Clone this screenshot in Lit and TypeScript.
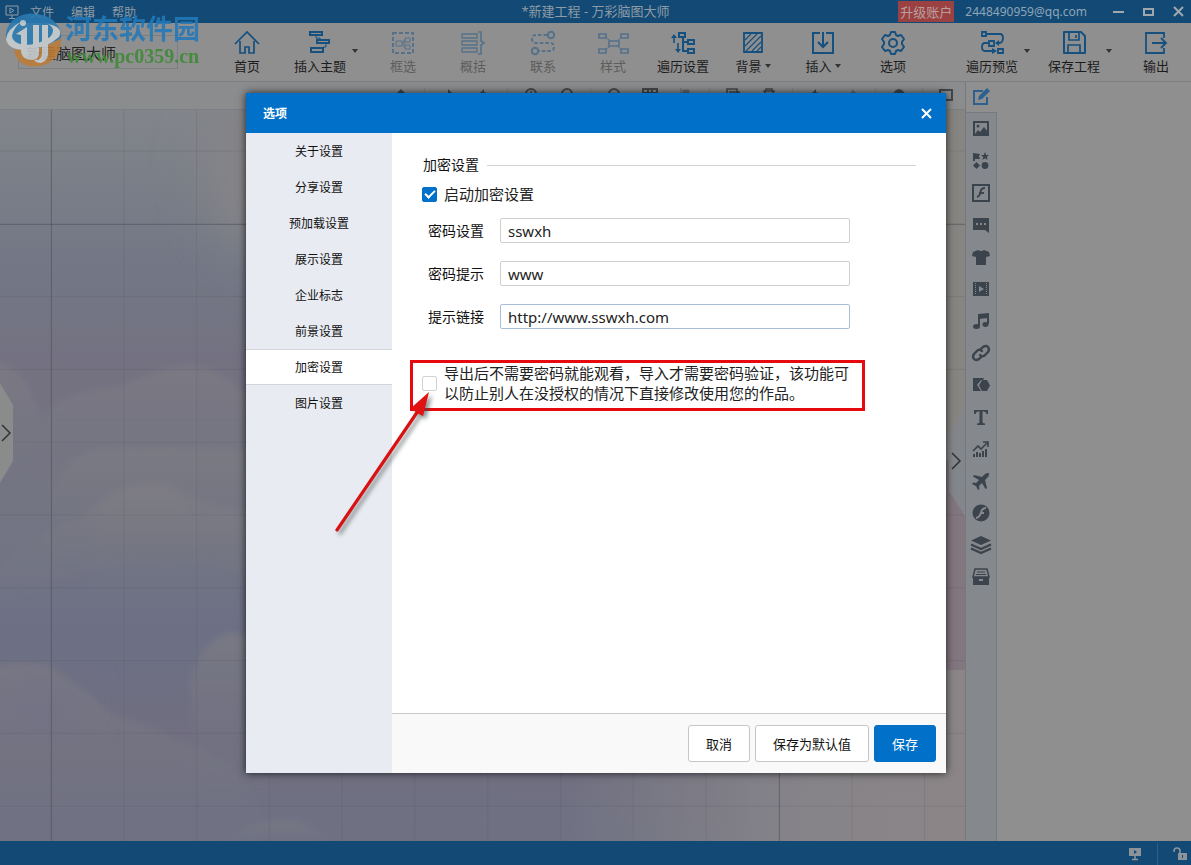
import { LitElement, html, svg, css, nothing, type TemplateResult } from "lit";
import { customElement, property, state } from "lit/decorators.js";
import { classMap } from "lit/directives/class-map.js";

/* ---------- icon set ---------- */

const icons: Record<string, TemplateResult> = {
  app: svg`<path d="M1 1h12v9H1zM7 10v3M4 13.500h6" fill="none" stroke="currentColor"/><path d="M5 3v5l4-2.500z" fill="none" stroke="currentColor"/>`,
  min: svg`<path d="M1 7h11" stroke="currentColor" stroke-width="2"/>`,
  max: svg`<path d="M2 4h9v6H2z" fill="none" stroke="currentColor" stroke-width="2"/>`,
  close: svg`<path d="M2 2l9 9M11 2l-9 9" stroke="currentColor" stroke-width="2" fill="none"/>`,

  home: svg`<path d="M1 14L13 2l12 12M6 11v12h5v-6h4v6h5V11" fill="none" stroke="currentColor" stroke-width="1.700"/>`,
  topic: svg`<g fill="none" stroke="currentColor" stroke-width="2"><path d="M3 2h12v3H3zM10 10h12v3H10zM4 18h12v4H4z"/><path d="M9 5v3h4v2M19 13v4h-3" stroke-width="1"/></g>`,
  select: svg`<rect x="3" y="3" width="20" height="20" fill="none" stroke="currentColor" stroke-width="2" stroke-dasharray="4 2"/><path d="M6 11h6v5H6zM15 8h5v4h-5zM15 15h5v4h-5zM12 13h2M15 10h-1v7h1" fill="none" stroke="currentColor"/>`,
  summary: svg`<path d="M2 4h15v4H2zM2 11h15v4H2zM2 18h15v4H2z" fill="none" stroke="currentColor" stroke-width="1.300"/><path d="M18 2h3v9l3 2-3 2v9h-3" fill="none" stroke="currentColor" stroke-width="1.600"/>`,
  relate: svg`<g fill="none" stroke="currentColor" stroke-width="2"><circle cx="21" cy="5" r="3.200"/><circle cx="5" cy="21" r="3.200"/><path d="M17 5H6q-4 0-4 4t4 4h14q4 0 4 4t-4 4H9" stroke-dasharray="3.500 2"/></g>`,
  style: svg`<g fill="none" stroke="currentColor" stroke-width="1.700"><path d="M-1 4h7v4h-7zM21 4h7v4h-7zM9 11h10v5H9zM-1 19h7v4h-7zM21 19h7v4h-7z"/><path d="M6 8l5 3M21 8l-4 3M6 19l5-3M21 19l-4-3" stroke-width="1"/></g>`,
  order: svg`<g fill="none" stroke="currentColor" stroke-width="2"><path d="M9 3h6v4H9zM18 10h6v4h-6zM18 19h6v4h-6z"/><path d="M13 7v14h5M13 12h5" /><path d="M4 6v7M8 13v8" stroke-width="1.600"/></g><path d="M1 8l3-4 3 4zM5 19l3 4 3-4z" fill="currentColor"/>`,
  pattern: svg`<path d="M4 3h18v19H4z" fill="none" stroke="currentColor" stroke-width="1.800"/><path d="M5 10l6-6M5 16L17 4M6 21L21 6M12 21l9-9M17 21l4-4" stroke="currentColor" stroke-width="1.200"/>`,
  insert: svg`<path d="M10 3H3v20h20V3h-7M13 2v15M8 12l5 5 5-5" fill="none" stroke="currentColor" stroke-width="2"/>`,
  gear: svg`<path d="M11 2h4l1 3 2 1 3-1 3 4-2 3v2l2 3-3 4-3-1-2 1-1 3h-4l-1-3-2-1-3 1-3-4 2-3v-2L2 9l3-4 3 1 2-1z" fill="none" stroke="currentColor" stroke-width="2" stroke-linejoin="round"/><circle cx="13" cy="13" r="4" fill="none" stroke="currentColor" stroke-width="2"/>`,
  preview: svg`<g fill="none" stroke="currentColor" stroke-width="1.800"><path d="M3 2h4v4H3zM10 11h5v5h-5zM19 19h5v4h-5z"/><path d="M7 4h14q3 0 3 4t-3 5h-3M10 13H6q-3 0-3 4t3 4h9"/></g><path d="M20 10l-4 3 4 3zM13 18l5 3-5 3z" fill="currentColor"/>`,
  save: svg`<path d="M3 2h17l4 4v17H3z" fill="none" stroke="currentColor" stroke-width="2" stroke-linejoin="round"/><path d="M8 2v8h10V2M15 5v3M7 23v-8h12v8" fill="none" stroke="currentColor" stroke-width="1.700"/>`,
  output: svg`<path d="M21 8V3H3v20h18v-5M9 13h14M18 8l5 5-5 5" fill="none" stroke="currentColor" stroke-width="1.800"/>`,

  qUp: svg`<path d="M7 1l6 6H9v6H5V7H1z" fill="currentColor"/>`,
  qNext: svg`<path d="M7 1l5 5-5 5V8H2V5h5z" fill="currentColor"/>`,
  qBack: svg`<path d="M7 1L2 6l5 5V8q4 0 6 4 0-7-6-8z" fill="currentColor"/>`,
  qZoom: svg`<circle cx="7" cy="6" r="5" fill="none" stroke="currentColor" stroke-width="2"/><path d="M4 6h6M7 3v6M10 10l4 4" stroke="currentColor" stroke-width="1.500"/>`,
  qRing: svg`<circle cx="7" cy="6" r="5" fill="none" stroke="currentColor" stroke-width="2"/>`,
  qGrid: svg`<path d="M0 1h14v12H0zM5 1v12M9 1v12M0 5h14M0 9h14" fill="none" stroke="currentColor" stroke-width="2"/>`,
  qAlign: svg`<path d="M2 0v14M4 2h6v3H4zM4 8h9v3H4z" stroke="currentColor" fill="currentColor" opacity=".5"/>`,
  qCopy: svg`<path d="M1 1h10v10H1zM4 4h9v9H4z" fill="none" stroke="currentColor" stroke-width="1.600"/>`,
  qTrash: svg`<path d="M1 3h12M4 3V1h6v2M3 3v10h8V3" fill="none" stroke="currentColor" stroke-width="1.700"/>`,
  qRedo: svg`<path d="M7 1l5 5-5 5V8q-4 0-6 4 0-7 6-8z" fill="currentColor" opacity=".5"/>`,
  qEye: svg`<path d="M0 7q7-12 14 0-7 8-14 0z" fill="currentColor"/>`,
  qFull: svg`<path d="M1 2h12v10H1z" fill="none" stroke="currentColor" stroke-width="2"/>`,

  edit: svg`<path d="M11 3H2v13h13V9" fill="none" stroke="currentColor" stroke-width="2"/><path d="M6 12l1-4 8-8 3 3-8 8z" fill="currentColor"/>`,
  picture: svg`<path d="M2 2h14v13H2z" fill="none" stroke="currentColor" stroke-width="2"/><path d="M3 14l3-4 2 2 4-5 4 5v3H3z" fill="currentColor"/><circle cx="6" cy="6" r="1.500" fill="currentColor"/>`,
  shapes: svg`<path d="M1 1l7 1-1 2 1 3H3v2H1zM13 0l1.200 3H17l-2.200 2 .8 3-2.600-1.700L10.400 8l.8-3L9 3h2.800zM4.500 10l3.500 3.500L4.500 17 1 13.500z" fill="currentColor"/><circle cx="13" cy="13.500" r="3.400" fill="currentColor"/>`,
  flashBox: svg`<path d="M1 1h16v16H1z" fill="none" stroke="currentColor" stroke-width="2"/><path d="M13 4q-4 0-4.500 4T5 13M7 9h5" fill="none" stroke="currentColor" stroke-width="2"/>`,
  comment: svg`<path fill-rule="evenodd" d="M1 2h16v15l-4-3H1zM4 7v2h2V7zm4 0v2h2V7zm4 0v2h2V7z" fill="currentColor"/>`,
  shirt: svg`<path d="M6 2q3 2 6 0l5 2 1 4-4 1v8H4V9L0 8l1-4z" fill="currentColor"/>`,
  film: svg`<path fill-rule="evenodd" d="M1 2h16v14H1zM7 6v6l5-3z" fill="currentColor"/><path d="M3.500 3v12M14.500 3v12" stroke="#85898d" stroke-dasharray="1 1"/>`,
  music: svg`<path d="M7 14V3l9-1v10" fill="none" stroke="currentColor" stroke-width="2"/><path d="M7 3l9-1v4L7 7z" fill="currentColor"/><ellipse cx="4.500" cy="14.500" rx="3.500" ry="2.500" fill="currentColor"/><ellipse cx="13.500" cy="12.500" rx="3" ry="2.400" fill="currentColor"/>`,
  link: svg`<g fill="none" stroke="currentColor" stroke-width="2.400" stroke-linecap="round"><path d="M8 6l3-3q3-2 5 0t0 5l-4 4q-2 1-4-1"/><path d="M10 12l-3 3q-3 2-5 0t0-5l4-4q2-1 4 1"/></g>`,
  shape: svg`<path d="M1 2h11l-1 2H9L5 9l4 6H1z" fill="currentColor"/><path d="M10 4h5l3 5.500-3 5.500h-5L7 9.500z" fill="currentColor"/>`,
  text: svg`<path d="M2 2h14v4h-1.500Q14 3.500 12 3.500h-1.500v10.500q0 1.500 2.500 1.500V17H5v-1.500q2.500 0 2.500-1.500V3.500H6Q4 3.500 3.500 6H2z" fill="currentColor"/>`,
  chart: svg`<path d="M2 17v-3M5 17v-5M8 17v-4M11 17v-6M14 17V9" stroke="currentColor" stroke-width="2"/><path d="M1 11l5-5 3 3 6-6M11 2h5v5" fill="none" stroke="currentColor" stroke-width="1.700"/>`,
  plane: svg`<path d="M17 1q-3-.5-5 2L10 5 2 3 1 4.500 7 8l-3 3-3-.5L0 12l4 2 2 4 1.500-1L7 14l3-3 3.500 6 1.500-1-2-8 2-2q2.500-2.500 2-5z" fill="currentColor"/>`,
  flash: svg`<circle cx="9" cy="9" r="8.500" fill="currentColor"/><path d="M14 4q-4 0-5 4.500T4 14M8 9h4" fill="none" stroke="#85898d" stroke-width="2"/>`,
  layers: svg`<path d="M9 0l10 4.500L9 9-1 4.500z" fill="currentColor"/><path d="M-1 8.500L9 13l10-4.500M-1 12.500L9 17l10-4.500" fill="none" stroke="currentColor" stroke-width="2.400"/>`,
  archive: svg`<path d="M3 1h12l2 8H1z" fill="none" stroke="currentColor" stroke-width="1.500"/><path d="M5 4h8M4 6.500h10" stroke="currentColor"/><path fill-rule="evenodd" d="M1 9h16v8H1zM7 11v2h4v-2z" fill="currentColor"/>`,

  screen: svg`<path fill-rule="evenodd" d="M1 1h12v8H1zM6 3v4l3-2z" fill="currentColor"/><path d="M7 9v3M4 12.500h6" stroke="currentColor" stroke-width="1.500"/>`,
  lock: svg`<path d="M1 5V4q0-3 3-3t3 3v2" fill="none" stroke="currentColor" stroke-width="1.600"/><path fill-rule="evenodd" d="M5 6h9v7H5zM9 8v3h1V8z" fill="currentColor"/>`,
};

const icon = (name: string, box: number) => html`<svg
  class="icon"
  width=${box}
  height=${box}
  viewBox="0 0 ${box} ${box}"
  aria-hidden="true"
>${icons[name]}</svg>`;

const baseStyles = css`
  * { box-sizing: border-box; }
  button {
    font: inherit;
    color: inherit;
    background: none;
    border: 0;
    padding: 0;
    cursor: pointer;
  }
  .icon { display: block; overflow: visible; flex: none; }
`;

/* ---------- title bar ---------- */

@customElement("title-bar")
export class TitleBar extends LitElement {
  static styles = [baseStyles, css`
    :host { display: block; background: #124a75; color: #8f9ba5; font-size: 13px; }
    .bar { display: grid; grid-template-columns: 1fr auto 1fr; align-items: center; height: 23px; }
    .menus { display: flex; align-items: center; gap: 17px; padding-left: 5px; font-size: 12px; }
    .menus .icon { margin-right: -6px; }
    .title { white-space: nowrap; line-height: 20px; padding-bottom: 2px; }
    .account { display: flex; align-items: center; justify-content: flex-end; padding-right: 6px; }
    .upgrade { background: #9b4141; color: #b9a0a0; height: 21px; line-height: 20px; padding: 0 2px; margin-right: 11px; }
    .mail { font-size: 12px; margin-right: 25px; color: #8fa4b5; }
    .win { display: flex; gap: 17px; color: #a0a8ae; }
  `];

  render() {
    return html`<header class="bar">
      <nav class="menus">
        ${icon("app", 14)}
        <button>文件</button><button>编辑</button><button>帮助</button>
      </nav>
      <div class="title">*新建工程 - 万彩脑图大师</div>
      <div class="account">
        <button class="upgrade">升级账户</button>
        <span class="mail">2448490959@qq.com</span>
        <div class="win">
          <button aria-label="最小化">${icon("min", 13)}</button>
          <button aria-label="最大化">${icon("max", 13)}</button>
          <button aria-label="关闭">${icon("close", 13)}</button>
        </div>
      </div>
    </header>`;
  }
}

/* ---------- main toolbar ---------- */

interface Tool { icon: string; label: string; off?: boolean; caret?: "side" | "inline"; }

@customElement("main-toolbar")
export class MainToolbar extends LitElement {
  static styles = [baseStyles, css`
    :host { display: block; background: #8f8f8f; border-bottom: 1px solid #7c7f82; font-size: 13px; color: #1c1c1c; }
    .bar { display: flex; height: 58px; padding-right: 3px; }
    .name { flex: none; width: 212px; padding: 12px 34px 12px 18px; }
    .name input {
      width: 100%; height: 34px; padding: 0 7px; border: 1px solid #7d8083; background: transparent;
      font: inherit; font-size: 15px; color: #222; outline: none;
    }
    .tool { display: flex; flex-direction: column; align-items: center; width: 70px; padding-top: 7px; line-height: 20px; white-space: nowrap; }
    .tool .icon { color: #15507f; }
    .off { color: #5d5d5d; }
    .off .icon { color: #56718a; }
    .caption { display: flex; align-items: center; gap: 3px; }
    .caret { width: 0; height: 0; border: 3px solid transparent; border-top: 4px solid #333; border-bottom: 0; }
    .split { display: flex; margin: 0 10px 0 6px; }
    .split .tool { width: 64px; }
    .split .caret { margin-top: 26px; }
    .end { display: flex; gap: 12px; margin-left: auto; }
    .end .split { margin: 0; }
    .end .tool { width: 64px; }
  `];

  private left: Tool[] = [
    { icon: "home", label: "首页" },
    { icon: "topic", label: "插入主题", caret: "side" },
    { icon: "select", label: "框选", off: true },
    { icon: "summary", label: "概括", off: true },
    { icon: "relate", label: "联系", off: true },
    { icon: "style", label: "样式", off: true },
    { icon: "order", label: "遍历设置" },
    { icon: "pattern", label: "背景", caret: "inline" },
    { icon: "insert", label: "插入", caret: "inline" },
    { icon: "gear", label: "选项" },
  ];
  private right: Tool[] = [
    { icon: "preview", label: "遍历预览", caret: "side" },
    { icon: "save", label: "保存工程", caret: "side" },
    { icon: "output", label: "输出" },
  ];

  private tool(t: Tool) {
    const button = html`<button class=${classMap({ tool: true, off: !!t.off })}>
      ${icon(t.icon, 26)}
      <span class="caption">${t.label}${t.caret === "inline" ? html`<i class="caret"></i>` : nothing}</span>
    </button>`;
    return t.caret === "side" ? html`<div class="split">${button}<i class="caret"></i></div>` : button;
  }

  render() {
    return html`<div class="bar">
      <div class="name"><input aria-label="工程名称" .value=${"新建脑图大师"} /></div>
      ${this.left.map((t) => this.tool(t))}
      <div class="end">${this.right.map((t) => this.tool(t))}</div>
    </div>`;
  }
}

/* ---------- drawing area ---------- */

@customElement("mind-canvas")
export class MindCanvas extends LitElement {
  static styles = [baseStyles, css`
    :host { display: flex; flex-direction: column; flex: 1; min-width: 0; }
    .quick {
      display: flex; justify-content: flex-end; align-items: flex-start; height: 28px; padding: 6px 12px 0 0;
      background: #8a8c8d; border-bottom: 1px solid #7c7f83; color: #44484b;
    }
    .group { display: flex; gap: 22px; padding: 0 16px; border-left: 1px solid #7f8284; height: 20px; }
    .group:first-child { border-left-color: transparent; }
    .group:last-child { padding-right: 0; }
    .scene { flex: 1; min-height: 0; width: 100%; display: block; }
  `];

  private groups = [
    ["qUp"], ["qNext", "qBack"], ["qZoom", "qRing"], ["qRing", "qGrid", "qAlign"],
    ["qCopy", "qTrash"], ["qBack", "qRedo"], ["qEye"], ["qFull"],
  ];

  render() {
    const step = 72.8;
    const cols = Array.from({ length: 13 }, (_, i) => 51 + i * step);
    const rows = Array.from({ length: 10 }, (_, i) => 41 + i * step);
    return html`
      <div class="quick">
        ${this.groups.map((g) => html`<div class="group">${g.map((n) => icon(n, 14))}</div>`)}
      </div>
      <svg class="scene" viewBox="0 0 965 731" preserveAspectRatio="xMinYMin slice" aria-hidden="true">
        <defs>
          <linearGradient id="sky" x1="0" y1="0" x2="0" y2="1">
            <stop offset="0" stop-color="#82858a"/><stop offset=".2" stop-color="#737886"/>
            <stop offset=".36" stop-color="#747181"/><stop offset=".55" stop-color="#747583"/>
            <stop offset=".72" stop-color="#6d7085"/><stop offset=".85" stop-color="#706e80"/>
            <stop offset="1" stop-color="#6f7183"/>
          </linearGradient>
          <linearGradient id="side" x1="0" y1="0" x2="1" y2="0">
            <stop offset="0" stop-color="#868489" stop-opacity="0"/><stop offset=".6" stop-color="#868489"/>
            <stop offset="1" stop-color="#8b8587"/>
          </linearGradient>
          <linearGradient id="puff" x1="0" y1="0" x2="0" y2="1">
            <stop offset="0" stop-color="#7e7d84" stop-opacity=".7"/><stop offset="1" stop-color="#737583" stop-opacity=".1"/>
          </linearGradient>
          <filter id="soft" x="-10%" y="-10%" width="120%" height="120%"><feGaussianBlur stdDeviation="3"/></filter>
          <filter id="haze" x="-50%" y="-50%" width="200%" height="200%"><feGaussianBlur stdDeviation="25"/></filter>
        </defs>
        <rect width="965" height="731" fill="url(#sky)"/>
        <ellipse cx="270" cy="60" rx="65" ry="85" fill="#858487" filter="url(#haze)"/>
        <g fill="url(#puff)" filter="url(#soft)">
          <path d="M-10 252Q24 256 34 290L45 318 40 400H-10z"/>
          <path d="M45 305Q65 280 120 277 160 255 195 256 230 262 260 300V400H45z"/>
          <path d="M52 390Q60 345 100 340 160 334 260 342V450H52z"/>
          <path d="M100 392Q135 365 170 376 182 385 190 405L260 400V480H90z"/>
          <path d="M-10 465Q40 420 80 408 130 365 175 378 205 398 260 405V470Q150 420-10 500z"/>
          <path d="M-10 558Q40 548 60 563 90 585 115 606 150 615 180 630 240 650 260 700V731H-10z"/>
          <path d="M190 575Q200 525 235 523L270 528V680H200z"/>
          <path d="M220 731Q290 690 330 731z"/>
        </g>
        <ellipse cx="40" cy="595" rx="40" ry="20" fill="#6f7086" filter="url(#haze)"/>
        <rect x="560" width="405" height="731" fill="url(#side)"/>
        <rect x="930" y="0" width="35" height="330" fill="#868582"/>
        <path d="M930 350h35v210h-35z" fill="#82767f"/>
        <g stroke="#55565e" stroke-opacity=".2">
          ${cols.map((x) => svg`<path d="M${x} 0V731"/>`)}
          ${rows.map((y) => svg`<path d="M0 ${y}H965"/>`)}
        </g>
        <g stroke="#4e5056" stroke-opacity=".5"><path d="M51.500 0V731M779.500 0V731M0 114.500H965"/></g>
      </svg>`;
  }
}

/* ---------- right rail ---------- */

@customElement("tool-rail")
export class ToolRail extends LitElement {
  static styles = [baseStyles, css`
    :host { display: flex; flex-direction: column; flex: none; width: 19%; border-left: 1px solid #74797e; background: #8f8f8f; }
    .tab { display: grid; place-items: center; width: 31px; height: 30px; color: #2d608e; }
    .rail { flex: 1; width: 31px; background: #85898d; border: 1px solid #767a7f; border-width: 1px 1px 0 0; color: #3b434d; display: flex; flex-direction: column; }
    .rail button { display: grid; place-items: center; height: 32px; }
  `];

  private names = ["picture", "shapes", "flashBox", "comment", "shirt", "film", "music", "link",
    "shape", "text", "chart", "plane", "flash", "layers", "archive"];

  render() {
    return html`
      <button class="tab" aria-label="编辑">${icon("edit", 18)}</button>
      <div class="rail">${this.names.map((n) => html`<button aria-label=${n}>${icon(n, 18)}</button>`)}</div>`;
  }
}

/* ---------- options dialog ---------- */

@customElement("options-dialog")
export class OptionsDialog extends LitElement {
  @state() private current = "加密设置";

  static styles = [baseStyles, css`
    :host { display: block; width: min(700px, 100%); }
    .dialog {
      position: relative; display: grid; grid-template: 40px 1fr 60px / 146px 1fr; height: 680px; max-height: 100vh;
      background: #fff; box-shadow: 0 0 8px rgba(0, 0, 0, 0.75); color: #111;
    }
    .head { grid-column: 1 / -1; display: flex; align-items: center; justify-content: space-between; padding: 0 13px 0 17px; background: #0070c8; color: #fff; }
    h1 { margin: 0; font-size: 12px; }
    .nav { grid-row: 2 / 4; background: #e8ebf1; display: flex; flex-direction: column; }
    .nav button { height: 36px; font-size: 12px; border: 1px solid transparent; border-width: 1px 0; }
    .nav .on { background: #fff; border-color: #d3d6db; }
    .body { padding: 22px 30px 0 18px; overflow: hidden; }
    .legend { display: flex; align-items: center; gap: 8px; margin: 0; padding-left: 13px; font-size: 14px; font-weight: 400; line-height: 20px; }
    .legend::after { content: ""; flex: 1; border-top: 1px solid #d4d4d4; }
    .check { display: flex; align-items: center; gap: 7px; font-size: 15px; line-height: 20px; color: #222; }
    .enable { margin: 9px 0 14px 12px; }
    input[type="checkbox"] { appearance: none; flex: none; display: grid; place-items: center; width: 15px; height: 15px; margin: 0; border: 1px solid #d2d2d2; border-radius: 2px; background: #fff; }
    input[type="checkbox"]:checked { background: #0070c8; border-color: #0070c8; }
    input[type="checkbox"]:checked::after { content: ""; width: 8px; height: 4px; border: solid #fff; border-width: 0 0 2px 2px; transform: translateY(-1px) rotate(-45deg); }
    .row { display: flex; align-items: center; gap: 16px; margin: 0 0 18px 18px; font-size: 14px; line-height: 20px; }
    .row input {
      width: 350px; min-width: 0; height: 25px; padding: 0 7px; border: 1px solid #cfcfcf; border-radius: 2px;
      font: inherit; font-size: 15px; color: #222; outline: none;
    }
    .row .active { border-color: #a9bfd8; }
    .hint { width: 455px; max-width: 100%; margin-top: 31px; padding: 0 9px 5px; border: 3px solid #e60a0f; }
    .foot { display: flex; align-items: center; justify-content: flex-end; gap: 5px; padding-right: 10px; background: #f9f9f9; border-top: 1px solid #c9c9c9; font-size: 13px; }
    .foot button { height: 37px; padding: 0 17px; border: 1px solid #c6c6c6; border-radius: 3px; background: #fff; }
    .foot .primary { background: #0070c8; border-color: #0070c8; color: #fff; }
    .arrow { position: absolute; left: 86px; top: 294px; filter: drop-shadow(3px 3px 2px rgba(60, 70, 70, 0.6)); pointer-events: none; }
  `];

  private pages = ["关于设置", "分享设置", "预加载设置", "展示设置", "企业标志", "前景设置", "加密设置", "图片设置"];
  private fields = [
    { id: "pwd", label: "密码设置", value: "sswxh" },
    { id: "tip", label: "密码提示", value: "www" },
    { id: "url", label: "提示链接", value: "http://www.sswxh.com", active: true },
  ];

  render() {
    return html`<section class="dialog" role="dialog" aria-labelledby="title">
      <header class="head">
        <h1 id="title">选项</h1>
        <button aria-label="关闭">${icon("close", 13)}</button>
      </header>
      <nav class="nav">
        ${this.pages.map((p) => html`<button class=${classMap({ on: p === this.current })} @click=${() => (this.current = p)}>${p}</button>`)}
      </nav>
      <div class="body">
        <h2 class="legend">加密设置</h2>
        <label class="check enable"><input type="checkbox" checked />启动加密设置</label>
        ${this.fields.map((f) => html`<div class="row">
          <label for=${f.id}>${f.label}</label>
          <input id=${f.id} type="text" class=${classMap({ active: !!f.active })} .value=${f.value} />
        </div>`)}
        <label class="check hint">
          <input type="checkbox" />
          <span>导出后不需要密码就能观看，导入才需要密码验证，该功能可以防止别人在没授权的情况下直接修改使用您的作品。</span>
        </label>
      </div>
      <footer class="foot">
        <button>取消</button><button>保存为默认值</button><button class="primary">保存</button>
      </footer>
      <svg class="arrow" width="100" height="150" viewBox="0 0 100 150" aria-hidden="true">
        <path d="M5 143L86 24" stroke="#d81212" stroke-width="3.200" stroke-linecap="round"/>
        <path d="M97 5L91 29 85 26 79 21z" fill="#e01212"/>
      </svg>
    </section>`;
  }
}

/* ---------- site mark ---------- */

@customElement("site-mark")
export class SiteMark extends LitElement {
  static styles = css`
    :host { display: flex; align-items: flex-start; gap: 3px; pointer-events: none; opacity: 0.88; }
    .words { display: flex; flex-direction: column; padding-top: 1px; }
    .cn { font-size: 27px; font-weight: 700; line-height: 32px; color: #2379ba; }
    .en { font-family: "Liberation Serif", serif; font-weight: 700; font-size: 20px; line-height: 22px; padding-left: 2px; color: #3c8a34; }
  `;
  render() {
    return html`
      <svg width="57" height="56" viewBox="0 0 57 56" aria-hidden="true">
        <path d="M1 27C-1 9 16-1 33 2 50 5 57 16 56 27L40 33 14 37Q3 35 1 27z" fill="#2a7cb3"/>
        <path d="M9 37Q36 41 56 26 57 45 42 52 26 58 15 50 10 45 9 37z" fill="#bd7c38"/>
        <path d="M17 9Q2 17 1 27 3 38 20 38 41 37 54 25 59 15 43 12 52 17 45 25 33 33 20 33 7 31 7 24 8 16 17 9z" fill="#c9cfd2"/>
        <path d="M11 22l11-7v18q0 3 4 3h2V13h6v28q0 6-6 7-12 0-12-10V23zM37 13h6v30q-1 6-7 8-5 0-7-3 8 1 8-7z" fill="#c9cfd2"/>
        <circle cx="18" cy="11" r="3" fill="#c9cfd2"/>
      </svg>
      <div class="words"><span class="cn">河东软件园</span><span class="en">www.pc0359.cn</span></div>`;
  }
}

/* ---------- page ---------- */

@customElement("app-root")
export class AppRoot extends LitElement {
  @property({ type: Boolean }) dialogOpen = true;

  static styles = [baseStyles, css`
    :host {
      display: flex; flex-direction: column; position: relative; height: 100vh; overflow: hidden; background: #8f8f8f;
      font-family: "Noto Sans", "Noto Sans CJK SC", sans-serif;
    }
    .work { flex: 1; min-height: 0; display: flex; position: relative; }
    .status { display: flex; align-items: center; justify-content: flex-end; height: 24px; background: #124a75; color: #8c9499; padding: 2px 4px 0 0; }
    .status button { padding: 0 15px; }
    .status button + button { padding-right: 0; border-left: 1px solid #2f5f86; height: 22px; }
    .handle { position: absolute; color: #303336; }
    .west { left: 0; top: calc(50% - 50px); }
    .east { right: 19%; top: calc(50% - 54px); }
    .mark { position: absolute; left: 5px; top: 12px; }
    .veil { position: absolute; inset: 0; display: grid; place-items: center; padding: 1px 0 0 1px; }
  `];

  render() {
    return html`
      <title-bar></title-bar>
      <main-toolbar></main-toolbar>
      <main class="work">
        <mind-canvas></mind-canvas>
        <svg class="handle east" width="16" height="108" viewBox="0 0 16 108" aria-hidden="true">
          <path d="M16 0L0 27v56l16 25z" fill="#83868a"/><path d="M3 45l8 8-8 8" fill="none" stroke="currentColor" stroke-width="1.500"/>
        </svg>
        <tool-rail></tool-rail>
      </main>
      <footer class="status">
        <button aria-label="演示">${icon("screen", 14)}</button>
        <button aria-label="锁定">${icon("lock", 14)}</button>
      </footer>
      <svg class="handle west" width="13" height="100" viewBox="0 0 13 100" aria-hidden="true">
        <path d="M0 0l13 22v56L0 100z" fill="#898c8b"/><path d="M2 42l8 8-8 8" fill="none" stroke="currentColor" stroke-width="1.500"/>
      </svg>
      <site-mark class="mark"></site-mark>
      ${this.dialogOpen ? html`<div class="veil"><options-dialog></options-dialog></div>` : nothing}`;
  }
}
